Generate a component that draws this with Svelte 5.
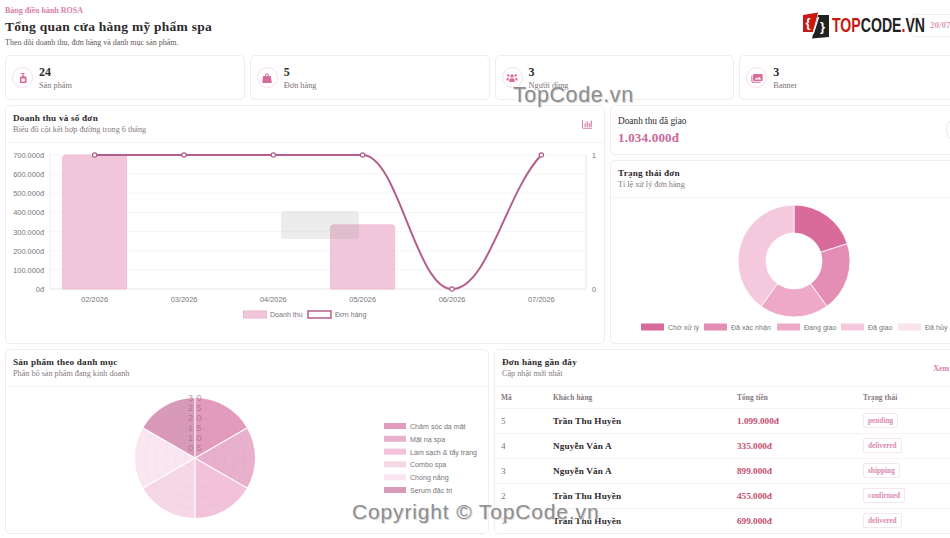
<script lang="ts">
	const stats = [
		{ value: '24', label: 'Sản phẩm', icon: 'bottle' },
		{ value: '5', label: 'Đơn hàng', icon: 'bag' },
		{ value: '3', label: 'Người dùng', icon: 'users' },
		{ value: '3', label: 'Banner', icon: 'images' }
	];

	const yTicks = ['700.000đ', '600.000đ', '500.000đ', '400.000đ', '300.000đ', '200.000đ', '100.000đ', '0đ'];
	const months = ['02/2026', '03/2026', '04/2026', '05/2026', '06/2026', '07/2026'];
	const revenue = [700000, 0, 0, 335000, 0, 0];
	const orders = [1, 1, 1, 1, 0, 1];

	const plot = { left: 50, right: 586, top: 155, bottom: 289 };
	const step = (plot.right - plot.left) / 6;
	const cx = (i: number) => plot.left + step * (i + 0.5);
	const lineY = (v: number) => plot.bottom - v * (plot.bottom - plot.top);
	const barY = (v: number) => plot.bottom - (v / 700000) * (plot.bottom - plot.top);

	const linePath = 'M94.7 155 L184 155 L273.3 155 L362.7 155 C398 155 416 289 452 289 C488 289 506 192 541.3 155';

	function polar(x: number, y: number, r: number, deg: number) {
		const a = ((deg - 90) * Math.PI) / 180;
		return [x + r * Math.cos(a), y + r * Math.sin(a)];
	}

	function sector(x: number, y: number, r: number, r0: number, from: number, to: number) {
		const [ax, ay] = polar(x, y, r, from);
		const [bx, by] = polar(x, y, r, to);
		const large = to - from > 180 ? 1 : 0;
		if (!r0) return `M${x} ${y} L${ax} ${ay} A${r} ${r} 0 ${large} 1 ${bx} ${by} Z`;
		const [cx2, cy2] = polar(x, y, r0, to);
		const [dx, dy] = polar(x, y, r0, from);
		return `M${ax} ${ay} A${r} ${r} 0 ${large} 1 ${bx} ${by} L${cx2} ${cy2} A${r0} ${r0} 0 ${large} 0 ${dx} ${dy} Z`;
	}

	const donut = [
		{ from: 0, to: 72, color: '#d96a9c' },
		{ from: 72, to: 144, color: '#e48db5' },
		{ from: 144, to: 216, color: '#eea9c6' },
		{ from: 216, to: 360, color: '#f4c9dd' }
	];
	const donutLegend = [
		{ label: 'Chờ xử lý', x: 641, color: '#d96a9c' },
		{ label: 'Đã xác nhận', x: 704, color: '#e48db5' },
		{ label: 'Đang giao', x: 777, color: '#eea9c6' },
		{ label: 'Đã giao', x: 841, color: '#f4c9dd' },
		{ label: 'Đã hủy', x: 898, color: '#fbe3ee' }
	];

	const categories = [
		{ label: 'Chăm sóc da mặt', color: '#e39bbd' },
		{ label: 'Mặt nạ spa', color: '#e8b0cc' },
		{ label: 'Làm sạch & tẩy trang', color: '#f2c1da' },
		{ label: 'Combo spa', color: '#f6d7e6' },
		{ label: 'Chống nắng', color: '#fae6f0' },
		{ label: 'Serum đặc trị', color: '#d99aba' }
	];
	const rings = [10, 20, 30, 40, 50];
	const ringLabels = ['0.5', '1.0', '1.5', '2.0', '2.5', '3.0'];

	const rows = [
		{ id: 5, name: 'Trần Thu Huyền', total: '1.099.000đ', status: 'pending' },
		{ id: 4, name: 'Nguyễn Văn A', total: '335.000đ', status: 'delivered' },
		{ id: 3, name: 'Nguyễn Văn A', total: '899.000đ', status: 'shipping' },
		{ id: 2, name: 'Trần Thu Huyền', total: '455.000đ', status: 'confirmed' },
		{ id: 1, name: 'Trần Thu Huyền', total: '699.000đ', status: 'delivered' }
	];
</script>

<div class="viewport">
	<div class="page">
		<header class="top">
			<div>
				<div class="eyebrow">Bảng điều hành ROSA</div>
				<h1>Tổng quan cửa hàng mỹ phẩm spa</h1>
				<p class="lead">Theo dõi doanh thu, đơn hàng và danh mục sản phẩm.</p>
			</div>
			<div class="date">20/07/2026</div>
		</header>

		<section class="stats">
			{#each stats as s}
				<div class="card stat">
					<span class="stat-icon">
						<svg viewBox="0 0 12 12" width="12" height="12" fill="currentColor">
							{#if s.icon === 'bottle'}
								<path d="M4.6 1h3v1H6.600v1.400h.8v1.200H8.600c.5 0 .9.4.9.9V11H2.900V5.500c0-.5.4-.9.9-.9h1.200V3.400h.6V2H3.900c0-.6.3-1 .7-1zM4.400 6.600v2.800h3.400V6.600z"/>
							{:else if s.icon === 'bag'}
								<path d="M4.200 4V3a1.800 1.800 0 0 1 3.600 0v1h2.100l.8 6.200c.1.5-.3.8-.8.8H2.100c-.5 0-.9-.3-.8-.8L2.100 4zm1-.1h1.600V3a.8.8 0 0 0-1.600 0z"/>
							{:else if s.icon === 'users'}
								<circle cx="6" cy="4" r="1.700"/><circle cx="2.300" cy="3.400" r="1.200"/><circle cx="9.700" cy="3.400" r="1.200"/>
								<path d="M3.300 10V8.200C3.300 6.900 4.200 6.200 6 6.200s2.700.7 2.700 2V10zM.4 7.800c0-1.300.7-2.100 2.100-2.100.3 0 .5 0 .7.100-.5.500-.8 1.200-.8 2v.6H.4zM11.600 7.800c0-1.300-.7-2.100-2.100-2.100-.3 0-.5 0-.7.100.5.500.8 1.200.8 2v.6h2z"/>
							{:else}
								<path d="M3 2h7.800c.5 0 .9.400.9.900v5.200c0 .5-.4.900-.9.900H3c-.5 0-.9-.4-.9-.9V2.900C2.100 2.400 2.500 2 3 2zm.6 5.600h6.600L8.400 4.800 6.800 6.600 5.700 5.500zM.4 3.500h1v5.600c0 .4.300.7.700.7h7.400v1H1.700C1 10.800.4 10.200.4 9.500z" fill-rule="evenodd"/>
							{/if}
						</svg>
					</span>
					<div>
						<div class="stat-value">{s.value}</div>
						<div class="stat-label">{s.label}</div>
					</div>
				</div>
			{/each}
		</section>

		<section class="row-main">
			<div class="card chart-card">
				<div class="card-head">
					<div>
						<h2>Doanh thu và số đơn</h2>
						<p>Biểu đồ cột kết hợp đường trong 6 tháng</p>
					</div>
					<svg class="head-icon" viewBox="0 0 12 12" width="10" height="10" fill="#d97fa8">
						<path d="M0 1h1.200v9.400H12v1.200H1.500C.7 11.600 0 11 0 10.200z"/>
						<rect x="3" y="5.500" width="1.500" height="4"/><rect x="5.500" y="3" width="1.500" height="6.500"/><rect x="8" y="5" width="1.500" height="4.500"/><rect x="10.300" y="2" width="1.500" height="7.500"/>
					</svg>
				</div>
				<svg class="chart" viewBox="6 143 598 199" width="598" height="199">
					{#each yTicks as t, i}
						{@const y = plot.top + (i * (plot.bottom - plot.top)) / 7}
						<line x1="50" x2={plot.right} y1={y} y2={y} stroke={i === 7 ? '#e8e4e6' : '#f8f5f6'} />
						<text class="axis" x="44" y={y + 3} text-anchor="end">{t}</text>
					{/each}
					<line x1="50" x2="50" y1={plot.top} y2={plot.bottom} stroke="#f0ecee" />
					<line x1={plot.right} x2={plot.right} y1={plot.top} y2={plot.bottom} stroke="#e8e4e6" />
					<text class="axis" x="592" y="158">1</text>
					<text class="axis" x="592" y="292">0</text>

					{#each revenue as v, i}
						{#if v > 0}
							<path
								d="M{cx(i) - 32} {plot.bottom} V{barY(v) + 3} q0 -3 3 -3 H{cx(i) + 29} q3 0 3 3 V{plot.bottom} Z"
								fill="#f1c6da"
								stroke="#ecbdd3"
							/>
						{/if}
					{/each}

					<path d={linePath} fill="none" stroke="#b25f8b" stroke-width="2" />
					{#each orders as v, i}
						<circle cx={cx(i)} cy={lineY(v)} r="2.200" fill="#fff" stroke="#b25f8b" stroke-width="1.200" />
					{/each}

					{#each months as m, i}
						<text class="axis" x={cx(i)} y="302" text-anchor="middle">{m}</text>
					{/each}

					<rect x="243.500" y="311" width="23" height="7" fill="#f1c6da" stroke="#eab8cf" />
					<text class="legend" x="270" y="317">Doanh thu</text>
					<rect x="308" y="311" width="23" height="7" fill="#fff" stroke="#b25f8b" stroke-width="1.500" />
					<text class="legend" x="335" y="317">Đơn hàng</text>
				</svg>
			</div>

			<div class="side">
				<div class="card revenue">
					<div>
						<div class="revenue-label">Doanh thu đã giao</div>
						<div class="revenue-value">1.034.000đ</div>
					</div>
					<span class="revenue-icon"></span>
				</div>
				<div class="card status-card">
					<div class="card-head">
						<div>
							<h2>Trạng thái đơn</h2>
							<p>Tỉ lệ xử lý đơn hàng</p>
						</div>
					</div>
					<svg class="chart" viewBox="611 198 368 144" width="368" height="144">
						{#each donut as d}
							<path d={sector(794, 261, 56, 28, d.from, d.to)} fill={d.color} stroke="#fff" stroke-width="0.800" />
						{/each}
						{#each donutLegend as l}
							<rect x={l.x} y="323.500" width="23" height="7" fill={l.color} />
							<text class="legend" x={l.x + 27} y="330">{l.label}</text>
						{/each}
					</svg>
				</div>
			</div>
		</section>

		<section class="row-bottom">
			<div class="card polar-card">
				<div class="card-head">
					<div>
						<h2>Sản phẩm theo danh mục</h2>
						<p>Phân bố sản phẩm đang kinh doanh</p>
					</div>
				</div>
				<svg class="chart" viewBox="6 388 482 144" width="482" height="144">
					{#each categories as c, i}
						<path d={sector(195, 459, 60, 0, i * 60, (i + 1) * 60)} fill={c.color} />
					{/each}
					{#each rings as r}
						<circle cx="195" cy="459" r={r} fill="none" stroke="#000" stroke-opacity="0.025" />
					{/each}
					{#each ringLabels as t, i}
						<text class="ring" x="195" y={452 - i * 10} text-anchor="middle">{t}</text>
					{/each}
					{#each categories as _, i}
						{@const p = polar(195, 459, 60, i * 60)}
						<line x1="195" y1="459" x2={p[0]} y2={p[1]} stroke="#fff" stroke-width="1.200" />
					{/each}
					{#each categories as c, i}
						<rect x="384" y={424 + i * 12.800} width="22" height="6" fill={c.color} />
						<text class="legend" x="410" y={430 + i * 12.800}>{c.label}</text>
					{/each}
				</svg>
			</div>

			<div class="card orders-card">
				<div class="card-head">
					<div>
						<h2>Đơn hàng gần đây</h2>
						<p>Cập nhật mới nhất</p>
					</div>
					<a class="all" href="#top">Xem tất cả</a>
				</div>
				<table>
					<thead>
						<tr><th>Mã</th><th>Khách hàng</th><th>Tổng tiền</th><th>Trạng thái</th></tr>
					</thead>
					<tbody>
						{#each rows as r}
							<tr>
								<td class="id">{r.id}</td>
								<td class="name">{r.name}</td>
								<td class="total">{r.total}</td>
								<td><span class="badge">{r.status}</span></td>
							</tr>
						{/each}
					</tbody>
				</table>
			</div>
		</section>
	</div>

	<!-- Watermarks sitting on top of the screenshot -->
	<svg class="logo" viewBox="0 0 122 27" width="122" height="27">
		<path d="M0 3 L15 0.500 L10 20 L0 20 Z" fill="#c81912" />
		<path d="M15 3 H26 V25 L9 26.500 Z" fill="#222" />
		<text class="logo-glyph" x="2.500" y="15" fill="#fff">&#123;</text>
		<text class="logo-glyph" x="17" y="19" fill="#fff">&#125;</text>
		<line x1="15.500" y1="5" x2="10" y2="22" stroke="#fff" stroke-width="1.500" />
		<text class="logo-text" x="29" y="20" textLength="93" lengthAdjust="spacingAndGlyphs"><tspan fill="#c81912">TOP</tspan><tspan fill="#222">CODE</tspan><tspan fill="#c81912">.</tspan><tspan fill="#222">VN</tspan></text>
	</svg>
	<div class="mark mark-a">TopCode.vn</div>
	<div class="mark mark-b">Copyright © TopCode.vn</div>
	<div class="ghost"></div>
</div>

<style>
	:global(body) {
		background: #fff;
		font-family: 'Liberation Serif', 'Times New Roman', serif;
		color: #2e2a2c;
	}

	.viewport {
		position: relative;
		width: 950px;
		height: 538px;
		overflow: hidden;
	}

	.page {
		width: 974px;
		margin-left: 5px;
		display: flex;
		flex-direction: column;
		gap: 5px;
	}

	.top {
		height: 50px;
		display: flex;
		justify-content: space-between;
		align-items: flex-start;
		padding-top: 6px;
		box-sizing: border-box;
	}

	.eyebrow {
		font-size: 8px;
		font-weight: 700;
		line-height: 10px;
		color: #d97fa8;
	}

	h1 {
		margin: 3px 0 0;
		font-size: 13.500px;
		line-height: 16px;
		letter-spacing: 0.25px;
		font-weight: 700;
	}

	.lead {
		margin: 3px 0 0;
		font-size: 8px;
		line-height: 10px;
		color: #5f565a;
	}

	.date {
		margin-top: 8px;
		height: 23px;
		width: 69px;
		box-sizing: border-box;
		padding-left: 19px;
		border: 1px solid #f4ebef;
		border-radius: 6px;
		font-size: 9px;
		font-weight: 700;
		line-height: 21px;
		color: #dd9dbb;
		white-space: nowrap;
	}

	.card {
		background: #fff;
		border: 1px solid #f4ebef;
		border-radius: 5px;
		box-sizing: border-box;
	}

	.stats {
		display: grid;
		grid-template-columns: repeat(4, 1fr);
		gap: 5px;
	}

	.stat {
		height: 45px;
		display: flex;
		align-items: center;
		gap: 6px;
		padding: 0 6px;
	}

	.stat-icon {
		width: 21px;
		height: 21px;
		flex: none;
		display: flex;
		align-items: center;
		justify-content: center;
		border: 1px solid #f6dfe9;
		border-radius: 50%;
		box-sizing: border-box;
		color: #d96a9c;
	}

	.stat-value {
		font-size: 12px;
		line-height: 14px;
		font-weight: 700;
		padding-top: 1px;
	}

	.stat-label {
		margin-top: 1px;
		font-size: 8.300px;
		line-height: 12px;
		color: #7d7277;
	}

	.row-main {
		display: grid;
		grid-template-columns: 600px 370px;
		gap: 5px;
		height: 239px;
	}

	.side {
		display: flex;
		flex-direction: column;
		gap: 5px;
		min-height: 0;
	}

	.card-head {
		display: flex;
		justify-content: space-between;
		align-items: center;
		height: 37px;
		padding: 0 12px 0 7px;
		box-sizing: border-box;
		border-bottom: 1px solid #faf1f5;
	}

	h2 {
		margin: 0;
		font-size: 9.200px;
		line-height: 12px;
		letter-spacing: 0.2px;
		font-weight: 700;
	}

	.card-head p {
		margin: 0;
		font-size: 8.200px;
		line-height: 12px;
		color: #85797e;
	}

	.chart {
		display: block;
	}

	.axis {
		font-family: 'Liberation Sans', Arial, sans-serif;
		font-size: 7.400px;
		fill: #77757a;
	}

	.legend {
		font-family: 'Liberation Sans', Arial, sans-serif;
		font-size: 7.100px;
		fill: #77757a;
	}

	.ring {
		font-family: 'Liberation Sans', Arial, sans-serif;
		font-size: 9px;
		letter-spacing: 0.5px;
		fill: #a0668a;
		fill-opacity: 0.7;
	}

	.revenue {
		height: 50px;
		flex: none;
		display: flex;
		justify-content: space-between;
		align-items: center;
		padding: 0 7px;
	}

	.revenue-label {
		font-size: 9.300px;
		line-height: 12px;
	}

	.revenue-value {
		margin-top: 3px;
		font-size: 13px;
		line-height: 16px;
		letter-spacing: 0.2px;
		font-weight: 700;
		color: #c9679b;
	}

	.revenue-icon {
		width: 26px;
		height: 26px;
		border: 1px solid #eee4e8;
		border-radius: 50%;
		box-sizing: border-box;
	}

	.status-card {
		flex: 1;
		min-height: 0;
	}

	.row-bottom {
		display: grid;
		grid-template-columns: 484px 486px;
		gap: 5px;
		height: 185px;
	}

	.all {
		font-size: 8px;
		font-weight: 700;
		color: #d97fa8;
		text-decoration: none;
		white-space: nowrap;
		margin-right: -3px;
	}

	table {
		width: 100%;
		border-collapse: collapse;
		table-layout: fixed;
	}

	th {
		box-sizing: border-box;
		height: 21px;
		padding: 0 0 0 6px;
		text-align: left;
		font-size: 7.400px;
		font-weight: 700;
		letter-spacing: 0.1px;
		color: #85797e;
		border-bottom: 1px solid #faf1f5;
	}

	th:nth-child(1) { width: 52px; }
	th:nth-child(2) { width: 184px; }
	th:nth-child(3) { width: 126px; }

	td {
		height: 25px;
		padding: 0 0 0 6px;
		font-size: 9.200px;
		border-bottom: 1px solid #faf1f5;
		box-sizing: border-box;
	}

	tr:last-child td {
		border-bottom: none;
	}

	.id {
		color: #7d7277;
	}

	.name {
		font-weight: 700;
		letter-spacing: 0.15px;
	}

	.total {
		font-weight: 700;
		color: #c4506f;
	}

	.badge {
		display: inline-block;
		padding: 0 4px;
		height: 15px;
		line-height: 13px;
		box-sizing: border-box;
		border: 1px solid #f6e6ed;
		border-radius: 2px;
		font-size: 7.300px;
		font-weight: 700;
		color: #d98ab0;
		vertical-align: middle;
	}

	.logo {
		position: absolute;
		left: 803px;
		top: 12px;
	}

	.logo-text {
		font-family: 'Liberation Sans', Arial, sans-serif;
		font-size: 20px;
		font-weight: 700;
	}

	.logo-glyph {
		font-family: 'Liberation Sans', Arial, sans-serif;
		font-size: 13px;
		font-weight: 700;
	}

	.mark {
		position: absolute;
		font-family: 'Liberation Sans', Arial, sans-serif;
		color: #8e8e8e;
		white-space: nowrap;
		text-shadow: 1px 1px 0 #d8d8d8, -1px 0 0 #fff;
	}

	.mark-a {
		left: 513px;
		top: 83px;
		font-size: 21.500px;
		letter-spacing: 0.6px;
	}

	.mark-b {
		left: 352px;
		top: 500px;
		font-size: 21px;
		letter-spacing: 0.85px;
	}

	.ghost {
		position: absolute;
		left: 281px;
		top: 211px;
		width: 78px;
		height: 28px;
		border-radius: 3px;
		background: rgba(160, 160, 160, 0.2);
	}
</style>
